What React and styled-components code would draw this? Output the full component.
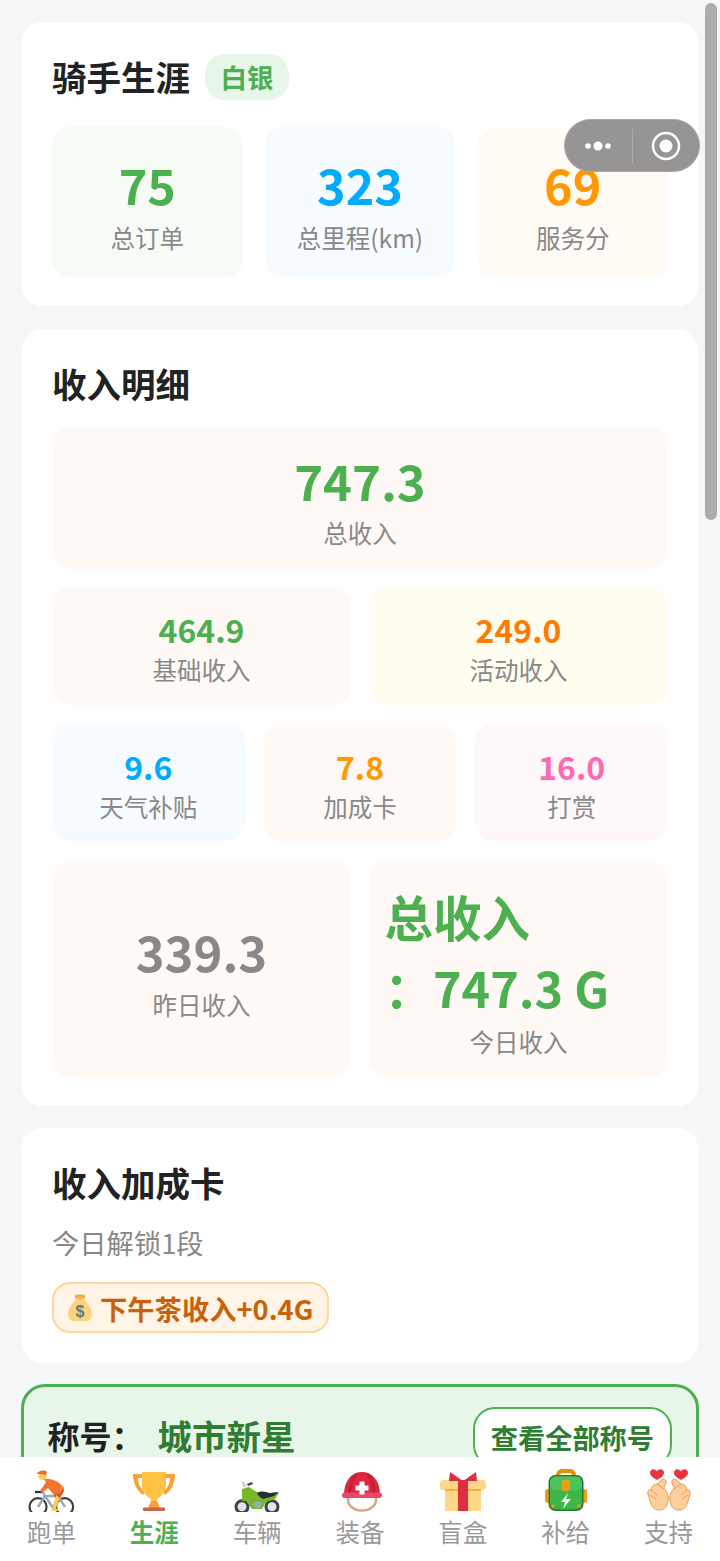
import React from 'react';
import styled, { createGlobalStyle } from 'styled-components';

const GlobalStyle = createGlobalStyle`
  html, body {
    margin: 0;
    padding: 0;
    background: #f5f6f8;
    font-family: "Noto Sans CJK SC", "Noto Sans", sans-serif;
  }
  * { box-sizing: border-box; }
`;

const Screen = styled.div`
  position: relative;
  width: 720px;
  height: 1561px;
  overflow: hidden;
  background: #f5f6f8;
`;

const Content = styled.div`
  display: flex;
  flex-direction: column;
  gap: 22px;
  padding: 22px 22px 0;
`;

const Card = styled.section`
  height: ${p => p.$h}px;
  margin-top: ${p => p.$mt || 0}px;
  background: #fff;
  border-radius: 20px;
  padding: 29px 30px 0;
`;

const TitleRow = styled.div`
  display: flex;
  align-items: center;
  gap: 15px;
  height: 50px;
  margin-bottom: 26px;
`;

const Title = styled.h2`
  margin: 0;
  font-size: 34.5px;
  line-height: 50px;
  font-weight: 700;
  color: #222;
`;

const Badge = styled.span`
  display: flex;
  align-items: center;
  height: 46px;
  margin-top: 1px;
  padding: 0 15.5px;
  border-radius: 20px;
  background: #e8f5e9;
  color: #4caf50;
  font-size: 26.5px;
  font-weight: 700;
`;

const Grid = styled.div`
  display: grid;
  grid-template-columns: repeat(${p => p.$cols}, 1fr);
  gap: ${p => p.$gap}px;
  margin-top: ${p => p.$top || 0}px;
`;

const Tile = styled.div`
  display: flex;
  flex-direction: column;
  align-items: center;
  justify-content: center;
  height: ${p => p.$h}px;
  padding-top: ${p => p.$pt || 0}px;
  border-radius: 18px;
  background: ${p => p.$bg};
`;

const Value = styled.div`
  margin-bottom: ${p => p.$mb || 0}px;
  font-size: ${p => p.$size}px;
  line-height: ${p => p.$lh}px;
  font-weight: 700;
  color: ${p => p.$color};
`;

const Label = styled.div`
  font-size: 24.5px;
  line-height: 36px;
  color: #888;
`;

const BigText = styled.div`
  align-self: stretch;
  padding: 0 15.5px;
  font-size: 48.5px;
  line-height: 71.5px;
  font-weight: 700;
  color: #4caf50;
`;

const Sub = styled.p`
  margin: 15px 0 0;
  font-size: 27.3px;
  line-height: 40px;
  color: #888;
`;

const BonusTag = styled.span`
  display: inline-flex;
  align-items: center;
  gap: 7px;
  height: 51px;
  margin-top: 20px;
  padding: 0 14px 0 13px;
  border: 2px solid #ffd59e;
  border-radius: 18px;
  background: #fff4e5;
  color: #c9600a;
  font-size: 27.3px;
  font-weight: 700;
`;

const HonorCard = styled.section`
  display: flex;
  justify-content: space-between;
  align-items: flex-start;
  height: 200px;
  margin: -1px -1px 0;
  padding: 0 24px;
  border: 3.5px solid #4caf50;
  border-radius: 24px;
  background: #e8f5e9;
`;

const HonorName = styled.div`
  display: flex;
  align-items: center;
  height: 50px;
  margin-top: 23px;
  margin-left: -0.5px;
`;

const HonorLabel = styled.span`
  width: 110px;
  font-size: 32px;
  font-weight: 700;
  color: #222;
`;

const HonorValue = styled.span`
  font-size: 34.5px;
  font-weight: 700;
  color: #2e7d32;
`;

const HonorButton = styled.button`
  height: 60px;
  margin-top: 19.5px;
  padding: 0 16px;
  border: 2px solid #4caf50;
  border-radius: 22px;
  background: #fff;
  color: #2e7d32;
  font-family: inherit;
  font-size: 27.2px;
  font-weight: 700;
`;

const TabBar = styled.nav`
  position: absolute;
  left: 0;
  right: 0;
  bottom: 0;
  height: 104px;
  display: grid;
  grid-template-columns: repeat(7, 1fr);
  background: #fff;
`;

const Tab = styled.div`
  display: flex;
  flex-direction: column;
  align-items: center;
  padding-top: 11px;
  color: ${p => (p.$active ? '#4caf50' : '#999')};
  font-size: 24.5px;
  line-height: 36px;
  font-weight: ${p => (p.$active ? 700 : 400)};
`;

const TabIcon = styled.svg`
  display: block;
  width: 48px;
  height: 44px;
  margin-bottom: 2px;
`;

const Capsule = styled.div`
  position: absolute;
  left: 564px;
  top: 119px;
  width: 136px;
  height: 53px;
  display: flex;
  align-items: center;
  border: 1px solid #a8a8a8;
  border-radius: 27px;
  background: #979593;
`;

const CapsulePart = styled.div`
  flex: 1;
  height: 100%;
  display: flex;
  align-items: center;
  justify-content: center;
`;

const CapsuleDivider = styled.span`
  width: 1px;
  height: 34px;
  background: #aeacaa;
`;

const ScrollThumb = styled.div`
  position: absolute;
  left: 705px;
  top: 3px;
  width: 12px;
  height: 517px;
  border-radius: 6px;
  background: #adadad;
`;

const Cyclist = () => (
  <TabIcon viewBox="0 0 48 44">
    <g fill="none" stroke="#3a4046" strokeWidth="2.2">
      <circle cx="11" cy="38.7" r="8.5" />
      <circle cx="37.6" cy="38.7" r="8.5" />
    </g>
    <path d="M11 39l7-11h13l7 11M18 28l8 12 5-12M16 24l2 5" fill="none" stroke="#9aa9b8" strokeWidth="2.4" />
    <path d="M8 24h7" stroke="#292f33" strokeWidth="2.2" />
    <circle cx="15.5" cy="8" r="4" fill="#ffcc4d" />
    <path d="M10 6c1-3 7-5 10-2l-1 3-5-1z" fill="#f4652f" />
    <path d="M17 11c6-1 15 2 18 7l-2 7-6 2-6-7-6 5-2-2 6-9z" fill="#f4752f" />
    <path d="M27 26l6-1 3-8 1 6-4 7-5 0z" fill="#d9541e" />
    <path d="M29 27l4 3-4 10 3 3h-8l2-4z" fill="#ffcc4d" />
  </TabIcon>
);

const Trophy = () => (
  <TabIcon viewBox="0 0 48 44">
    <path d="M3 6h12v4H8c0 6 3 11 7 14l-2 3C7 23 3 15 3 6zM45 6H33v4h7c0 6-3 11-7 14l2 3c6-4 10-12 10-21z" fill="#f9a233" />
    <path d="M12 4h24v12c0 8-5 13-9 15v4h-6v-4c-4-2-9-7-9-15z" fill="#ffc244" />
    <path d="M21 33h6l3 7H18z" fill="#f9a233" />
    <rect x="13" y="39.5" width="22" height="3.5" rx="1" fill="#c1694f" />
  </TabIcon>
);

const Motorbike = () => (
  <TabIcon viewBox="0 0 48 44">
    <g fill="#dfe5ea" stroke="#3e4347" strokeWidth="3">
      <circle cx="9" cy="38.7" r="6" />
      <circle cx="39" cy="38.7" r="6" />
    </g>
    <path d="M9 21l7-2 8 5 10 3 12-2-4 6-9 3-4 7H19l-6-8H9z" fill="#76b82a" />
    <path d="M24 25c5-3 9-1 12 0l10-1-5 4-11 3c-2-1-5-3-6-6z" fill="#292f33" />
    <path d="M11 20L8 14l2-1 4 5z" fill="#ccd6dd" />
    <path d="M14 16l5-2 1 2-5 2z" fill="#3e4347" />
    <path d="M20 34h9l-2 6h-5z" fill="#99aab5" />
  </TabIcon>
);

const Helmet = () => (
  <TabIcon viewBox="0 0 48 44">
    <ellipse cx="26" cy="32" rx="14" ry="10.5" fill="none" stroke="#d9a58a" strokeWidth="2.5" />
    <path d="M8 27C8 12 16 4 26 4s18 8 18 23z" fill="#e0263f" />
    <path d="M20 5c-5 5-8 13-8 22h3c0-8 3-16 7-22zM32 5c5 5 8 13 8 22h-3c0-8-3-16-7-22z" fill="#c01f38" />
    <rect x="6" y="24.5" width="40" height="5.5" rx="2.7" fill="#e8476a" />
    <path d="M23.5 13.5h5v4h4v5h-4v4h-5v-4h-4v-5h4z" fill="#fff" />
  </TabIcon>
);

const Gift = () => (
  <TabIcon viewBox="0 0 48 44">
    <rect x="6" y="20" width="36" height="23" fill="#fdd888" />
    <rect x="1" y="12" width="46" height="10" rx="3" fill="#fdd888" />
    <rect x="6" y="21" width="36" height="2" fill="#ffac33" />
    <rect x="19" y="12" width="10" height="31" fill="#dd2e44" />
    <path d="M24 13L11 4l-1 9zM24 13l13-9 1 9z" fill="#dd2e44" />
  </TabIcon>
);

const Backpack = () => (
  <TabIcon viewBox="0 0 48 44">
    <path d="M14 8c0-5 3-7 6-7h8c3 0 6 2 6 7h-4c0-2-1-3-3-3h-6c-2 0-3 1-3 3z" fill="#e8900c" />
    <rect x="3" y="21" width="7" height="14" rx="3" fill="#f39c12" />
    <rect x="38" y="21" width="7" height="14" rx="3" fill="#f39c12" />
    <rect x="6.5" y="7" width="35" height="36" rx="7" fill="#1f7a32" />
    <rect x="8" y="8.5" width="32" height="33" rx="6" fill="#3db54a" />
    <rect x="8" y="8.5" width="32" height="14" rx="6" fill="#4fc25b" />
    <rect x="20" y="12" width="8" height="11" rx="2.5" fill="#f39c12" />
    <circle cx="11" cy="38" r="1.8" fill="#f39c12" />
    <circle cx="37" cy="38" r="1.8" fill="#f39c12" />
    <path d="M26 25l-7 9h4l-2 7 8-10h-5z" fill="#e8f8ea" />
  </TabIcon>
);

const OneHand = () => (
  <g>
    <path d="M12 3.5C10 0 5 1 5 5c0 3 4 5 7 7 3-2 7-4 7-7 0-4-5-5-7-1.500z" fill="#e8333f" />
    <path
      d="M18 11c2 0 4 2 3 4l-2 5c3 4 5 8 4 13-1 5-3 9-9 9-5 0-8-4-9-9l-2-7c-1-3 1-5 3-4l1-3c1-2 3-3 5-3z"
      fill="#fdcf9a"
      stroke="#e89a5c"
      strokeWidth="1"
    />
    <path d="M6 22l6 5M5 27l6 4M12 16l7 5" fill="none" stroke="#e89a5c" strokeWidth="1" />
  </g>
);

const FingerHearts = () => (
  <TabIcon viewBox="0 0 48 44">
    <OneHand />
    <g transform="translate(48 0) scale(-1 1)">
      <OneHand />
    </g>
  </TabIcon>
);

const MoneyBag = () => (
  <svg width="26" height="28" viewBox="0 0 26 28">
    <path d="M9 4C8 8 1 13 1 20c0 5 3 7 6 7h12c3 0 6-2 6-7 0-7-7-12-8-16z" fill="#fdd27f" />
    <rect x="8" y="0.5" width="10" height="4" rx="1" fill="#f4a94f" />
    <text x="13" y="23" textAnchor="middle" fontSize="16" fontWeight="700" fill="#67757f" fontFamily="Liberation Sans, sans-serif">$</text>
  </svg>
);

const tabs = [
  { name: '跑单', Icon: Cyclist },
  { name: '生涯', Icon: Trophy, active: true },
  { name: '车辆', Icon: Motorbike },
  { name: '装备', Icon: Helmet },
  { name: '盲盒', Icon: Gift },
  { name: '补给', Icon: Backpack },
  { name: '支持', Icon: FingerHearts },
];

const App = () => (
  <Screen>
    <GlobalStyle />
    <Content>
      <Card $h={284}>
        <TitleRow>
          <Title>骑手生涯</Title>
          <Badge>白银</Badge>
        </TitleRow>
        <Grid $cols={3} $gap={22}>
          <Tile $h={150} $bg="#f6fbf6">
            <Value $size={48.5} $lh={72} $color="#4caf50">75</Value>
            <Label>总订单</Label>
          </Tile>
          <Tile $h={150} $bg="#f5fbff">
            <Value $size={48.5} $lh={72} $color="#00aaff">323</Value>
            <Label>总里程(km)</Label>
          </Tile>
          <Tile $h={150} $bg="#fffaf4">
            <Value $size={48.5} $lh={72} $color="#ff9800">69</Value>
            <Label>服务分</Label>
          </Tile>
        </Grid>
      </Card>

      <Card $h={777} $mt={1}>
        <Title>收入明细</Title>
        <Grid $cols={1} $gap={0} $top={19}>
          <Tile $h={142} $bg="#fff9f5">
            <Value $size={49} $lh={70} $color="#4caf50">747.3</Value>
            <Label>总收入</Label>
          </Tile>
        </Grid>
        <Grid $cols={2} $gap={18} $top={18}>
          <Tile $h={118} $pt={2} $bg="#fff9f5">
            <Value $size={32} $lh={44} $mb={1} $color="#4caf50">464.9</Value>
            <Label>基础收入</Label>
          </Tile>
          <Tile $h={118} $pt={2} $bg="#fffdf0">
            <Value $size={32} $lh={44} $mb={1} $color="#ff7a00">249.0</Value>
            <Label>活动收入</Label>
          </Tile>
        </Grid>
        <Grid $cols={3} $gap={19} $top={19}>
          <Tile $h={117} $pt={3} $bg="#f5fbff">
            <Value $size={32} $lh={44} $mb={1} $color="#00aaff">9.6</Value>
            <Label>天气补贴</Label>
          </Tile>
          <Tile $h={117} $pt={3} $bg="#fff9f5">
            <Value $size={32} $lh={44} $mb={1} $color="#ff9800">7.8</Value>
            <Label>加成卡</Label>
          </Tile>
          <Tile $h={117} $pt={3} $bg="#fff8fb">
            <Value $size={32} $lh={44} $mb={1} $color="#ff69b4">16.0</Value>
            <Label>打赏</Label>
          </Tile>
        </Grid>
        <Grid $cols={2} $gap={18} $top={20}>
          <Tile $h={216} $bg="#fff9f5">
            <Value $size={49} $lh={72} $color="#888">339.3</Value>
            <Label>昨日收入</Label>
          </Tile>
          <Tile $h={216} $pt={2} $bg="#fff9f5">
            <BigText>总收入<br />：747.3 G</BigText>
            <Label>今日收入</Label>
          </Tile>
        </Grid>
      </Card>

      <Card $h={235}>
        <Title>收入加成卡</Title>
        <Sub>今日解锁1段</Sub>
        <BonusTag>
          <MoneyBag />
          下午茶收入+0.4G
        </BonusTag>
      </Card>

      <HonorCard>
        <HonorName>
          <HonorLabel>称号：</HonorLabel>
          <HonorValue>城市新星</HonorValue>
        </HonorName>
        <HonorButton>查看全部称号</HonorButton>
      </HonorCard>
    </Content>

    <TabBar>
      {tabs.map(({ name, Icon, active }) => (
        <Tab key={name} $active={active}>
          <Icon />
          {name}
        </Tab>
      ))}
    </TabBar>

    <Capsule>
      <CapsulePart>
        <svg width="30" height="14" viewBox="0 0 30 14">
          <circle cx="5" cy="7" r="2.8" fill="#fff" />
          <circle cx="15" cy="7" r="4.5" fill="#fff" />
          <circle cx="25" cy="7" r="2.8" fill="#fff" />
        </svg>
      </CapsulePart>
      <CapsuleDivider />
      <CapsulePart>
        <svg width="30" height="30" viewBox="0 0 30 30">
          <circle cx="15" cy="15" r="13" fill="none" stroke="#fff" strokeWidth="2.5" />
          <circle cx="15" cy="15" r="6.5" fill="#fff" />
        </svg>
      </CapsulePart>
    </Capsule>
    <ScrollThumb />
  </Screen>
);

export default App;
